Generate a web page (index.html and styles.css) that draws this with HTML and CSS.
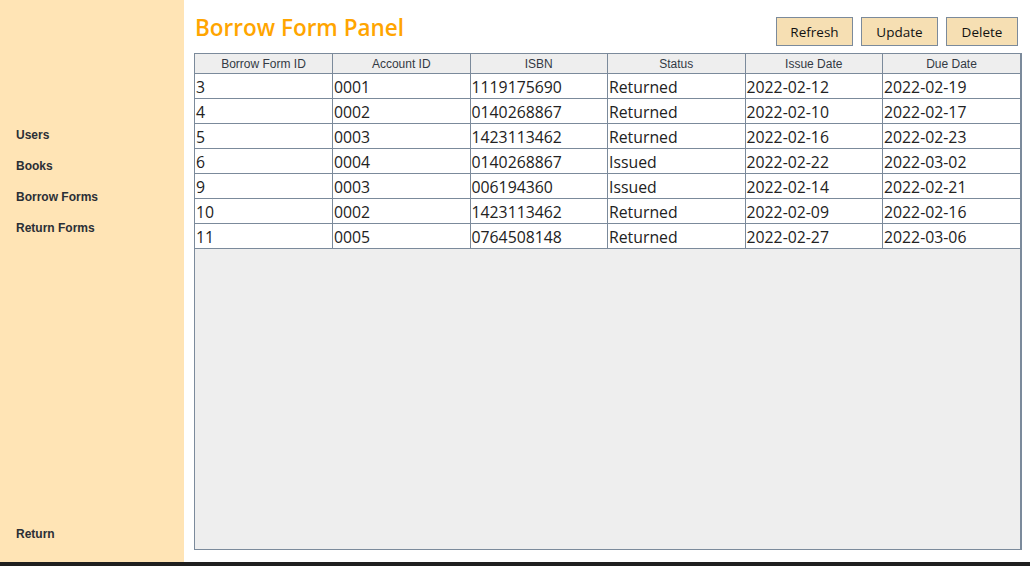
FILE: index.html
```html
<!DOCTYPE html>
<html>
<head>
<meta charset="utf-8">
<title>Borrow Form Panel</title>
<link rel="stylesheet" href="styles.css">
</head>
<body>
<div class="app">
  <aside class="sidebar">
    <nav class="nav">
      <div class="nav-item">Users</div>
      <div class="nav-item">Books</div>
      <div class="nav-item">Borrow Forms</div>
      <div class="nav-item">Return Forms</div>
    </nav>
    <div class="nav-item nav-return">Return</div>
  </aside>
  <main class="main">
    <header class="topbar">
      <h1 class="title">Borrow Form Panel</h1>
      <div class="actions">
        <button class="btn">Refresh</button>
        <button class="btn">Update</button>
        <button class="btn btn-last">Delete</button>
      </div>
    </header>
    <div class="table-wrap">
      <table class="grid">
        <thead>
          <tr>
            <th>Borrow Form ID</th>
            <th>Account ID</th>
            <th>ISBN</th>
            <th>Status</th>
            <th>Issue Date</th>
            <th>Due Date</th>
          </tr>
        </thead>
        <tbody>
          <tr><td>3</td><td>0001</td><td>1119175690</td><td>Returned</td><td>2022-02-12</td><td>2022-02-19</td></tr>
          <tr><td>4</td><td>0002</td><td>0140268867</td><td>Returned</td><td>2022-02-10</td><td>2022-02-17</td></tr>
          <tr><td>5</td><td>0003</td><td>1423113462</td><td>Returned</td><td>2022-02-16</td><td>2022-02-23</td></tr>
          <tr><td>6</td><td>0004</td><td>0140268867</td><td>Issued</td><td>2022-02-22</td><td>2022-03-02</td></tr>
          <tr><td>9</td><td>0003</td><td>006194360</td><td>Issued</td><td>2022-02-14</td><td>2022-02-21</td></tr>
          <tr><td>10</td><td>0002</td><td>1423113462</td><td>Returned</td><td>2022-02-09</td><td>2022-02-16</td></tr>
          <tr><td>11</td><td>0005</td><td>0764508148</td><td>Returned</td><td>2022-02-27</td><td>2022-03-06</td></tr>
        </tbody>
      </table>
    </div>
  </main>
</div>
<div class="taskbar"></div>
</body>
</html>
```
FILE: styles.css
```css
html, body {
  margin: 0;
  padding: 0;
  background: #ffffff;
}

body {
  width: 1030px;
  height: 566px;
  overflow: hidden;
}

.app {
  display: flex;
  height: 562px;
}

.sidebar {
  width: 184px;
  flex: none;
  background: #FFE4B5;
  display: flex;
  flex-direction: column;
  padding: 128px 0 21px 16px;
  box-sizing: border-box;
}

.nav {
  display: flex;
  flex-direction: column;
  gap: 17px;
}

.nav-item {
  font-family: "Liberation Sans", Arial, sans-serif;
  font-weight: bold;
  font-size: 12px;
  line-height: 14px;
  color: #2b2f36;
}

.nav-return {
  margin-top: auto;
}

.main {
  flex: 1;
  display: flex;
  flex-direction: column;
  padding: 0 8px 12px 10px;
  box-sizing: border-box;
  min-width: 0;
}

.topbar {
  height: 53px;
  flex: none;
  display: flex;
  justify-content: space-between;
  align-items: flex-start;
}

.title {
  margin: 12px 0 0 1px;
  font-family: "Open Sans", "Noto Sans", sans-serif;
  font-weight: 600;
  font-size: 22.5px;
  line-height: 32px;
  color: #FFA500;
}

.actions {
  display: flex;
  gap: 8px;
  margin-top: 17px;
  margin-right: 4px;
}

.btn {
  width: 77px;
  height: 29px;
  background: #F6DFB3;
  border: 1px solid #7B8A9B;
  border-radius: 0;
  padding: 1px 0 0 0;
  font-family: "Open Sans", "Noto Sans", sans-serif;
  font-size: 13.5px;
  color: #111111;
}

.btn-last {
  width: 72px;
}

.table-wrap {
  flex: 1;
  background: #EEEEEE;
  border: 1px solid #7B8A9B;
  border-right-width: 2px;
  box-sizing: border-box;
}

.grid {
  width: 100%;
  border-collapse: collapse;
  table-layout: fixed;
}

.grid th {
  height: 19px;
  padding: 1px 0 0 0;
  box-sizing: border-box;
  background: #EEEEEE;
  font-family: "Liberation Sans", Arial, sans-serif;
  font-weight: normal;
  font-size: 12px;
  color: #333a44;
  text-align: center;
  border-right: 1px solid #7B8A9B;
  border-bottom: 1px solid #7B8A9B;
}

.grid td {
  height: 25px;
  padding: 2px 0 0 1px;
  box-sizing: border-box;
  background: #ffffff;
  font-family: "Open Sans", "Noto Sans", sans-serif;
  font-size: 15.8px;
  line-height: 22px;
  color: #222222;
  white-space: nowrap;
  overflow: hidden;
  border-right: 1px solid #7B8A9B;
  border-bottom: 1px solid #7B8A9B;
}

.grid th:last-child,
.grid td:last-child {
  border-right: none;
}

.taskbar {
  height: 4px;
  background: #1f1f1f;
}
```
